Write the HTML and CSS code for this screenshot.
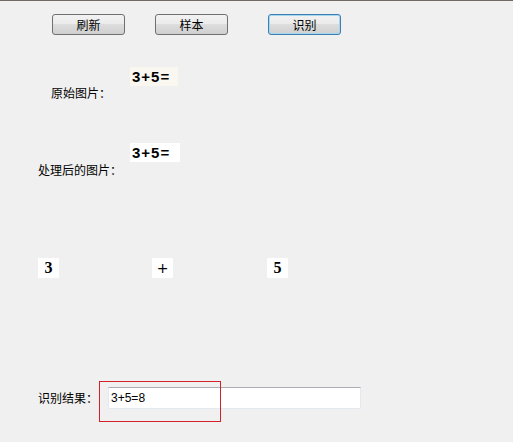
FILE: index.html
```html
<!DOCTYPE html>
<html lang="zh-CN">
<head>
    <meta charset="UTF-8">
    <title>识别</title>
    <link rel="stylesheet" href="styles.css">
</head>
<body>
    <div class="toolbar">
        <button class="btn">刷新</button>
        <button class="btn btn-2">样本</button>
        <button class="btn btn-3 focused">识别</button>
    </div>

    <!-- 原始图片 -->
    <div class="row row-orig">
        <span class="label">原始图片：</span>
        <div class="pic pic-orig">3+5=</div>
    </div>

    <!-- 处理后的图片 -->
    <div class="row row-proc">
        <span class="label">处理后的图片：</span>
        <div class="pic">3+5=</div>
    </div>

    <!-- 切分后的字符 -->
    <div class="chars">
        <div class="char">3</div>
        <div class="char char-2">+</div>
        <div class="char char-3">5</div>
    </div>

    <div class="result">
        <span class="label">识别结果：</span>
        <input class="result-box" type="text" value="3+5=8">
        <div class="highlight"></div>
    </div>
</body>
</html>
```

FILE: styles.css
```css
* {
    margin: 0;
    padding: 0;
    box-sizing: border-box;
}
body {
    background: #f0f0f0;
    border-top: 1px solid #6f6a66;
    font-family: "Noto Sans CJK SC", "Liberation Sans", sans-serif;
    font-size: 12px;
    color: #000;
    height: 100vh;
}
.toolbar {
    display: flex;
    padding-left: 52px;
    margin-top: 13px;
}
.btn {
    width: 73px;
    height: 21px;
    font-family: "Noto Sans CJK SC", sans-serif;
    font-size: 12px;
    line-height: 19px;
    color: #000;
    border: 1px solid #707070;
    border-radius: 3px;
    background: linear-gradient(#f2f2f2, #ebebeb 45%, #dddddd 50%, #cfcfcf);
}
.btn-2 {
    margin-left: 30px;
}
.btn-3 {
    margin-left: 40px;
}
.focused {
    border-color: #3c7fb1;
    box-shadow: inset 0 0 0 1px #a5d7f0;
}
.row {
    display: flex;
    align-items: flex-start;
}
.label {
    line-height: 12px;
    white-space: nowrap;
}
.row-orig {
    margin-top: 32px;
    padding-left: 51px;
}
.row-orig .label {
    margin-top: 20px;
}
.pic {
    height: 19px;
    width: 50px;
    margin-left: 8px;
    background: #fff;
    font-family: "Liberation Sans", sans-serif;
    font-weight: bold;
    font-size: 15px;
    line-height: 19px;
    letter-spacing: 1px;
    padding-left: 2px;
}
.pic-orig {
    margin-left: 19px;
    background: #faf7f1;
    width: 48px;
}
.row-proc {
    margin-top: 44px;
    padding-left: 38px;
}
.row-proc .label {
    margin-top: 21px;
}
.chars {
    display: flex;
    margin-top: 82px;
    padding-left: 38px;
}
.char {
    width: 21px;
    height: 20px;
    background: #fff;
    font-family: "Liberation Serif", serif;
    font-weight: bold;
    font-size: 16px;
    line-height: 20px;
    text-align: center;
}
.char-2 {
    margin-left: 93px;
    font-family: "DejaVu Sans", sans-serif;
    font-weight: normal;
    font-size: 14px;
}
.char-3 {
    margin-left: 94px;
}
.result {
    position: relative;
    display: flex;
    align-items: center;
    margin-top: 109px;
    padding-left: 38px;
}
.result-box {
    width: 253px;
    height: 22px;
    margin-left: 10px;
    border: 1px solid #e3e9ef;
    border-top-color: #abadb3;
    background: #fff;
    font-family: "Liberation Sans", sans-serif;
    font-size: 12px;
    padding-left: 2px;
    outline: none;
}
.highlight {
    position: absolute;
    left: 99px;
    top: -6px;
    width: 122px;
    height: 41px;
    border: 1px solid #d2232a;
}
```
